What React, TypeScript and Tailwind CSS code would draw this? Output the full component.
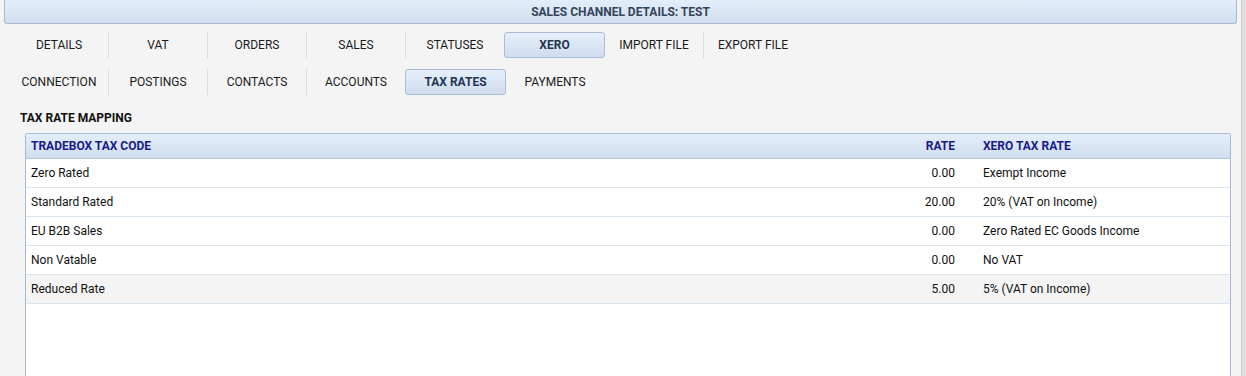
import React from 'react'

const mainTabs = ['DETAILS', 'VAT', 'ORDERS', 'SALES', 'STATUSES', 'XERO', 'IMPORT FILE', 'EXPORT FILE']
const subTabs = ['CONNECTION', 'POSTINGS', 'CONTACTS', 'ACCOUNTS', 'TAX RATES', 'PAYMENTS']

const rows = [
  { code: 'Zero Rated', rate: '0.00', xero: 'Exempt Income' },
  { code: 'Standard Rated', rate: '20.00', xero: '20% (VAT on Income)' },
  { code: 'EU B2B Sales', rate: '0.00', xero: 'Zero Rated EC Goods Income' },
  { code: 'Non Vatable', rate: '0.00', xero: 'No VAT' },
  { code: 'Reduced Rate', rate: '5.00', xero: '5% (VAT on Income)' },
]

function TabRow({ tabs, active }: { tabs: string[]; active: string }) {
  return (
    <div className="flex h-[26px] items-stretch pl-[10px]">
      {tabs.map((t, i) => {
        const isActive = t === active
        const prevActive = i > 0 && tabs[i - 1] === active
        const showDivider = i > 0 && !isActive && !prevActive
        return (
          <React.Fragment key={t}>
            {showDivider && <div className="w-px self-stretch bg-[#d3deeb]" />}
            {isActive ? (
              <div className="flex w-[101px] items-center justify-center rounded-[3px] border border-[#abbdd6] bg-gradient-to-b from-[#e6effa] to-[#d0ddef] text-[12px] font-bold text-[#243552]">
                {t}
              </div>
            ) : (
              <div className="flex w-[98px] items-center justify-center text-[12px] text-[#1b1b1b]">{t}</div>
            )}
          </React.Fragment>
        )
      })}
    </div>
  )
}

export default function App() {
  return (
    <div className="flex h-[376px] w-[1246px] overflow-hidden bg-[#f4f4f4] font-['Roboto',sans-serif]">
      <div className="flex flex-1 flex-col">
        <div className="mx-[4px] flex h-[24px] items-center justify-center rounded-b-[3px] border-x border-b border-[#a8b9d2] bg-gradient-to-b from-[#e3eefa] to-[#d0deef] text-[12px] font-bold text-[#34445a]">
          SALES CHANNEL DETAILS: TEST
        </div>
        <div className="mt-[8px]">
          <TabRow tabs={mainTabs} active="XERO" />
        </div>
        <div className="mt-[11px]">
          <TabRow tabs={subTabs} active="TAX RATES" />
        </div>
        <div className="mt-[14px] pl-[20px] text-[12px] font-bold text-[#111]">TAX RATE MAPPING</div>
        <div className="ml-[25px] mr-[10px] mt-[6px] flex flex-1 flex-col rounded-t-[3px] border-x border-t border-[#a8b9d2] bg-white">
          <div className="flex h-[25px] items-center border-b border-[#b4c5dc] bg-gradient-to-b from-[#e3eefa] to-[#d0deef] text-[12px] font-bold text-[#1a1a8a]">
            <div className="flex-1 pl-[5px]">TRADEBOX TAX CODE</div>
            <div className="w-[120px] text-right">RATE</div>
            <div className="w-[275px] pl-[28px]">XERO TAX RATE</div>
          </div>
          {rows.map((r, i) => (
            <div
              key={r.code}
              className={`flex h-[29px] items-center border-b border-[#dbe5f0] text-[12px] text-[#111] ${i === rows.length - 1 ? 'bg-[#f4f4f4]' : 'bg-white'}`}
            >
              <div className="flex-1 pl-[5px]">{r.code}</div>
              <div className="w-[120px] text-right">{r.rate}</div>
              <div className="w-[275px] pl-[28px]">{r.xero}</div>
            </div>
          ))}
        </div>
      </div>
      <div className="w-[5px] border-l border-[#cfcfcf] bg-[#dedede]" />
    </div>
  )
}
